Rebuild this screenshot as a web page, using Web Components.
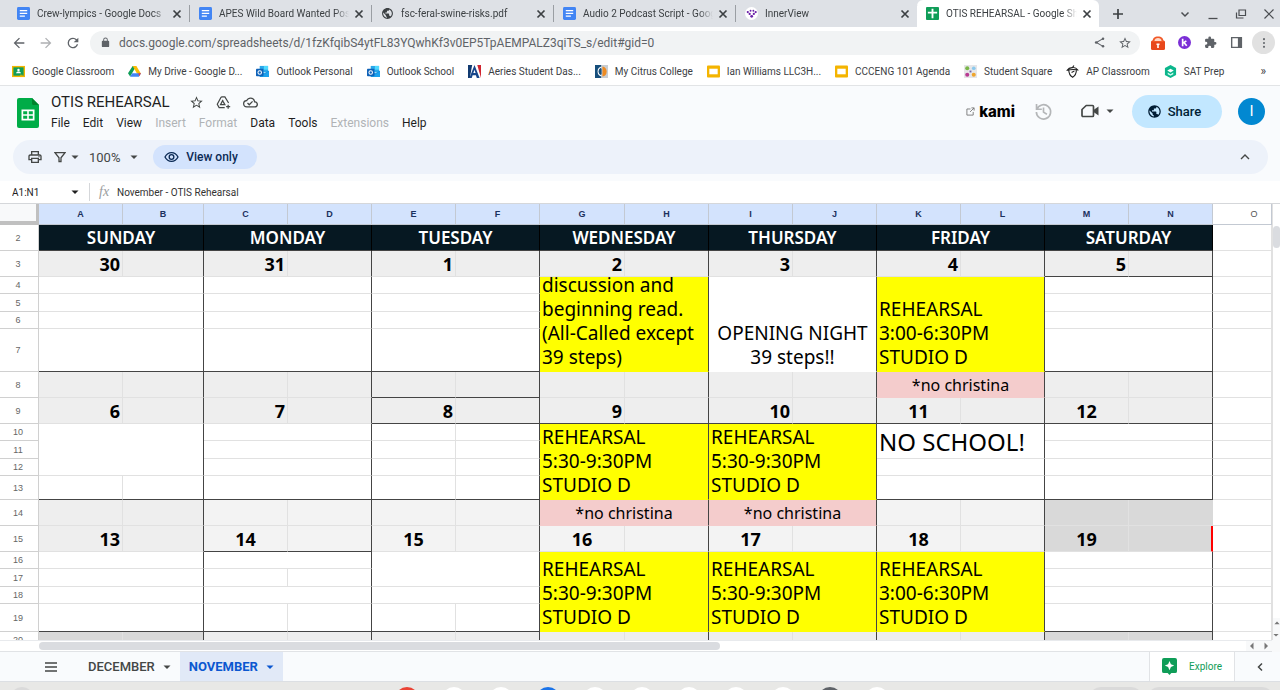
<!DOCTYPE html>
<html lang="en">
<head>
<meta charset="utf-8">
<title>OTIS REHEARSAL - Google Sheets</title>
<style>
  html, body { height: 100%; }
  body {
    margin: 0;
    display: flex;
    flex-direction: column;
    overflow: hidden;
    background: #fff;
    color: #3c4043;
    font-family: Roboto, "Liberation Sans", sans-serif;
    font-size: 10px;
  }
</style>
</head>
<body>
  <tab-strip>
    <browser-tab icon="docs">Crew-lympics - Google Docs</browser-tab>
    <browser-tab icon="docs">APES Wild Board Wanted Poster</browser-tab>
    <browser-tab icon="earth">fsc-feral-swine-risks.pdf</browser-tab>
    <browser-tab icon="docs">Audio 2 Podcast Script - Google Docs</browser-tab>
    <browser-tab icon="inner">InnerView</browser-tab>
    <browser-tab icon="sheetTab" active>OTIS REHEARSAL - Google Sheets</browser-tab>
  </tab-strip>
  <address-bar></address-bar>
  <bookmark-bar>
    <book-mark icon="classroom">Google Classroom</book-mark>
    <book-mark icon="drive">My Drive - Google D...</book-mark>
    <book-mark icon="outlook">Outlook Personal</book-mark>
    <book-mark icon="outlook">Outlook School</book-mark>
    <book-mark icon="aeries">Aeries Student Das...</book-mark>
    <book-mark icon="citrus">My Citrus College</book-mark>
    <book-mark icon="slides">Ian Williams LLC3H...</book-mark>
    <book-mark icon="slides">CCCENG 101 Agenda</book-mark>
    <book-mark icon="square">Student Square</book-mark>
    <book-mark icon="acorn">AP Classroom</book-mark>
    <book-mark icon="sat">SAT Prep</book-mark>
  </bookmark-bar>
  <docs-header>OTIS REHEARSAL</docs-header>
  <sheet-toolbar></sheet-toolbar>
  <formula-bar></formula-bar>
  <sheet-grid></sheet-grid>
  <sheet-tabs></sheet-tabs>
  <os-shelf></os-shelf>

<script>
// [viewBox, markup]; shapes without a fill of their own use currentColor
const ICONS = {
  docs: ['0 0 14 14', '<rect width="14" height="14" rx="1.5" fill="#4285f4"/><path d="M3 3.2h8v1.4H3zM3 6.2h8v1.4H3zM3 9.2h5.500v1.400H3z" fill="#fff"/>'],
  sheetTab: ['0 0 14 14', '<rect width="14" height="14" rx="1" fill="#0f9d58"/><path d="M6 2h2v3h4v2H8v5H6V7H2V5h4z" fill="#fff"/>'],
  earth: ['0 0 24 24', '<path d="M12 2C6.480 2 2 6.480 2 12s4.480 10 10 10 10-4.480 10-10S17.520 2 12 2zm-1 17.930c-3.950-.490-7-3.850-7-7.930 0-.620.080-1.210.210-1.790L9 15v1c0 1.100.900 2 2 2v1.930zm6.900-2.540c-.260-.810-1-1.390-1.900-1.390h-1v-3c0-.550-.450-1-1-1H8v-2h2c.550 0 1-.450 1-1V7h2c1.100 0 2-.900 2-2v-.410c2.930 1.190 5 4.060 5 7.410 0 2.080-.800 3.970-2.100 5.390z"/>'],
  inner: ['0 0 14 14', '<circle cx="7" cy="7" r="7" fill="#fff"/><g fill="#6b21a8"><circle cx="3" cy="5.500" r="1.200"/><circle cx="6" cy="4" r="1"/><circle cx="9" cy="4" r="1"/><circle cx="11.500" cy="5.500" r="1.200"/><circle cx="5" cy="7.500" r="1.200"/><circle cx="9.500" cy="7.500" r="1.200"/><circle cx="7.200" cy="10" r="1.500"/></g>'],
  close: ['0 0 12 12', '<path d="M2.500 2.500l7 7M9.500 2.500l-7 7" stroke="currentColor" stroke-width="1.700"/>'],
  thinClose: ['0 0 12 12', '<path d="M1.500 1.500l9 9M10.500 1.500l-9 9" stroke="currentColor" stroke-width="1.200"/>'],
  plus: ['0 0 12 12', '<path d="M6 1v10M1 6h10" stroke="currentColor" stroke-width="1.700"/>'],
  chevDown: ['0 0 12 12', '<path d="M2.500 4.500L6 8l3.500-3.500" fill="none" stroke="currentColor" stroke-width="1.500"/>'],
  chevUp: ['0 0 12 12', '<path d="M2 8l4-4 4 4" fill="none" stroke="currentColor" stroke-width="1.400"/>'],
  chevLeft: ['0 0 12 12', '<path d="M8 2.500L4.500 6 8 9.500" fill="none" stroke="currentColor" stroke-width="1.500"/>'],
  minimize: ['0 0 12 12', '<path d="M1.500 10.500h9" stroke="currentColor" stroke-width="1.300"/>'],
  restore: ['0 0 12 12', '<path d="M1.500 4.500v5.500h7M4 2h6.500v5.500H4z" fill="none" stroke="currentColor" stroke-width="1.200"/>'],
  back: ['0 0 24 24', '<path d="M20 11H7.830l5.590-5.590L12 4l-8 8 8 8 1.410-1.410L7.830 13H20v-2z"/>'],
  forward: ['0 0 24 24', '<path d="M12 4l-1.410 1.410L16.170 11H4v2h12.170l-5.580 5.590L12 20l8-8z"/>'],
  reload: ['0 0 24 24', '<path d="M17.650 6.350A7.958 7.958 0 0 0 12 4a8 8 0 1 0 7.730 10h-2.080A6 6 0 1 1 12 6c1.660 0 3.140.690 4.220 1.780L13 11h7V4l-2.350 2.350z"/>'],
  lock: ['0 0 24 24', '<path d="M18 8h-1V6A5 5 0 0 0 7 6v2H6a2 2 0 0 0-2 2v10c0 1.100.900 2 2 2h12a2 2 0 0 0 2-2V10a2 2 0 0 0-2-2zM9 6a3 3 0 0 1 6 0v2H9z"/>'],
  share: ['0 0 14 14', '<path d="M11.500 2L3 7l8.500 5" fill="none" stroke="currentColor" stroke-width="1.300"/><circle cx="11.500" cy="2.200" r="1.600"/><circle cx="2.800" cy="7" r="1.700"/><circle cx="11.500" cy="11.800" r="1.600"/>'],
  star: ['0 0 24 24', '<path d="M22 9.240l-7.190-.620L12 2 9.190 8.630 2 9.240l5.460 4.730L5.820 21 12 17.270 18.180 21l-1.630-7.030L22 9.240zM12 15.400l-3.760 2.270 1-4.280-3.320-2.880 4.380-.380L12 6.100l1.710 4.040 4.380.380-3.320 2.880 1 4.280L12 15.400z"/>'],
  redLock: ['0 0 14 14', '<rect y="4.500" width="14" height="9.500" rx="1.500" fill="#e8481c"/><path d="M1.500 6C1.500 2 3.500.5 7 .5S12.500 2 12.500 6z" fill="#f15a29"/><path d="M3.500 5c0-2 1.500-3 3.500-3s3.500 1 3.500 3z" fill="#ffd9c7"/><path d="M5.500 7.500h3v1.500H7.800v3H6.200V9h-.7z" fill="#fff"/>'],
  kamiDot: ['0 0 14 14', '<circle cx="7" cy="7" r="7" fill="#7b2fd6"/><path d="M5 3v8M5 8l4-2.800M6.600 7.200L9.400 10.500" stroke="#fff" stroke-width="1.800" fill="none"/>'],
  puzzle: ['0 0 24 24', '<path d="M20.500 11H19V7a2 2 0 0 0-2-2h-4V3.500a2.500 2.500 0 0 0-5 0V5H4a2 2 0 0 0-2 2v3.800h1.500a2.700 2.700 0 0 1 0 5.400H2V20c0 1.100.900 2 2 2h3.800v-1.500a2.700 2.700 0 0 1 5.400 0V22H17a2 2 0 0 0 2-2v-4h1.500a2.500 2.500 0 0 0 0-5z"/>'],
  panel: ['0 0 14 14', '<path d="M1.800 1.800h10.400v10.400H1.800z" fill="none" stroke="currentColor" stroke-width="1.500"/><path d="M8.500 1.500H13v11H8.500z"/>'],
  dots: ['0 0 14 14', '<circle cx="7" cy="2.500" r="1.200"/><circle cx="7" cy="7" r="1.200"/><circle cx="7" cy="11.500" r="1.200"/>'],
  classroom: ['0 0 14 14', '<path d="M0 1h14v12H0z" fill="#f4b400"/><path d="M1.500 2.500h11v9h-11z" fill="#0f9d58"/><path d="M8.500 10.500h3v1h-3z" fill="#f4b400"/><circle cx="7" cy="5.300" r="1.300" fill="#fff"/><path d="M4.300 9c.3-1.400 1.300-2 2.700-2s2.400.6 2.700 2z" fill="#fff"/>'],
  drive: ['0 0 14 14', '<path d="M5 1h4L4.500 8.700 2.300 12.500 0 9z" fill="#0f9d58"/><path d="M5 1h4l5 8.500H9.800z" fill="#fbbc04"/><path d="M4.500 9h9.500l-2.300 3.700H2.200z" fill="#4285f4"/><path d="M11 9h3l-1.800 3z" fill="#ea4335"/>'],
  outlook: ['0 0 14 14', '<path d="M4 1h9v7H4z" fill="#28a8ea"/><path d="M8.500 1H13v4H8.500z" fill="#50d9ff"/><path d="M4 6l5 3 5-3v7H4z" fill="#1490df"/><path d="M4 13l10-6v6z" fill="#1ba1ec"/><rect y="4" width="8" height="8" rx=".8" fill="#0f62b8"/><circle cx="4" cy="8" r="1.900" fill="none" stroke="#fff" stroke-width="1.100"/>'],
  aeries: ['0 0 14 14', '<path d="M0 0h4.500L2 14H0z" fill="#123a70"/><path d="M10 0h4v14z" fill="#d02430"/><path d="M7 0l5.500 14h-3L8.500 11H5l-1 3H1.500z" fill="#17468b"/><path d="M7 5l1.200 3.700H5.700z" fill="#fff"/>'],
  citrus: ['0 0 14 14', '<path d="M0 0h7v14H0z" fill="#174f7c"/><path d="M7 0h7v14H7z" fill="#c9cdd1"/><path d="M7 2.200a5 5 0 0 0 0 9.600" fill="none" stroke="#fff" stroke-width="1.300"/><path d="M7 4a3 3 0 0 0 0 6z" fill="#174f7c"/><path d="M8 1.500a5.600 5.600 0 0 1 0 11z" fill="#ee8b22"/>'],
  slides: ['0 0 14 14', '<rect y=".5" width="14" height="13" rx="1" fill="#f4b400"/><path d="M2.500 4h9v6h-9z" fill="#fff"/>'],
  square: ['0 0 14 14', '<rect width="14" height="14" fill="#e6e6e8"/><circle cx="3.500" cy="3.500" r="2.200" fill="#7ab648"/><circle cx="10.500" cy="3.500" r="2" fill="#8cc9ed"/><circle cx="3.500" cy="10.500" r="2.200" fill="#b83a92"/><circle cx="10.500" cy="10.500" r="2.200" fill="#efa52d"/><path d="M6 6h2v2H6z" fill="#6c63ae"/>'],
  acorn: ['0 0 14 14', '<path d="M1.500 5.500C3 3 5 3 7 2.800S11 3 12.500 5.200C9 4.600 5 4.700 1.500 5.500zM3 5.200c0 4 1.200 6.500 4.200 8 3-1.700 4-4 4-8M7 2.800L8.500.5M6 8l3-1.500" fill="none" stroke="#222" stroke-width="1.200"/>'],
  sat: ['0 0 14 14', '<path d="M7 0l6 3.200v7.600L7 14l-6-3.200V3.200z" fill="#0cb68c"/><path d="M3.500 6L7 4l3.500 2L7 8.200z" fill="#fff"/><path d="M4 8.200l3 1.800 3-1.800V10l-3 1.700L4 10z" fill="#d2fff2"/>'],
  sheets: ['0 0 22 30', '<path d="M2 0h13l7 7v21a2 2 0 0 1-2 2H2a2 2 0 0 1-2-2V2a2 2 0 0 1 2-2z" fill="#00ac47"/><path d="M15 0l7 7h-5.500A1.500 1.500 0 0 1 15 5.500z" fill="#00832d"/><path d="M4.500 11.500h13v11h-13zM6.200 13.200v3h4v-3zm5.600 0v3h4v-3zm-5.600 4.600v3h4v-3zm5.600 0v3h4v-3z" fill="#fff" fill-rule="evenodd"/>'],
  driveAdd: ['0 0 16 14', '<path d="M5.500 1h4l4 6.500M5.500 1L1.300 8.800l2 3.700h6M7.500 4.200L4.800 9.300h4.700L7.500 5.800M13 9.300v4.400M10.800 11.500h4.400" fill="none" stroke="currentColor" stroke-width="1.300"/>'],
  cloud: ['0 0 24 24', '<path d="M19.350 10.040A7.490 7.490 0 0 0 12 4C9.110 4 6.600 5.640 5.350 8.040A5.994 5.994 0 0 0 0 14c0 3.310 2.690 6 6 6h13c2.760 0 5-2.240 5-5 0-2.640-2.050-4.780-4.650-4.960zM19 18H6a4 4 0 0 1-.440-7.980l1.070-.110.500-.950a5.469 5.469 0 0 1 10.260 1.470l.300 1.500 1.530.110A3 3 0 0 1 19 18zm-9-3.820l-2.090-2.090L6.500 13.500 10 17l6.010-6.010-1.410-1.410z"/>'],
  external: ['0 0 10 10', '<path d="M5 2.200H1V9h7V5.500M6 1h3v3M9 1L4.500 5.500" fill="none" stroke="currentColor"/>'],
  history: ['0 0 24 24', '<path d="M3.500 9.500a9 9 0 1 1-.5 3M3.200 2.500v6.700h6.700M12 7v5.800l4.300 2.600" fill="none" stroke="currentColor" stroke-width="2.100"/>'],
  camera: ['0 0 18 16', '<path d="M5.200 2.500h6.300q1 0 1 1v9q0 1-1 1H2q-1 0-1-1V6.500z" fill="none" stroke="currentColor" stroke-width="1.700" stroke-linejoin="round"/><path d="M12.500 7L17.500 3.500v9L12.500 9z"/>'],
  caret: ['0 0 8 8', '<path d="M.500 2.500h7L4 6z"/>'],
  print: ['0 0 24 24', '<path d="M19 8h-1V3H6v5H5c-1.660 0-3 1.340-3 3v6h4v4h12v-4h4v-6c0-1.660-1.340-3-3-3zM8 5h8v3H8V5zm8 12v2H8v-4h8v2zm2-2v-2H6v2H4v-4c0-.550.450-1 1-1h14c.550 0 1 .450 1 1v4h-2z"/><circle cx="18" cy="11.500" r="1"/>'],
  filter: ['0 0 12 12', '<path d="M1 1.700h10L7 6.800v3.700H5V6.800z" fill="none" stroke="currentColor" stroke-width="1.300"/>'],
  eye: ['0 0 18 14', '<path d="M1.200 7C3 3.500 5.700 1.800 9 1.800S15 3.500 16.800 7C15 10.500 12.300 12.200 9 12.200S3 10.500 1.200 7z" fill="none" stroke="currentColor" stroke-width="1.600"/><circle cx="9" cy="7" r="2.800" fill="none" stroke="currentColor" stroke-width="1.600"/>'],
  menu: ['0 0 12 10', '<path d="M0 1h12M0 5h12M0 9h12" stroke="currentColor" stroke-width="1.400"/>'],
  explore: ['0 0 16 18', '<path d="M2 0h12a2 2 0 0 1 2 2v12a2 2 0 0 1-2 2h-4l-2 2-2-2H2a2 2 0 0 1-2-2V2a2 2 0 0 1 2-2z" fill="#0f9d58"/><path d="M8 3l1.500 3.500L13 8 9.500 9.500 8 13 6.500 9.500 3 8l3.500-1.500z" fill="#fff"/>']
};

// Shared by every component: resets for the host and the controls used below
const BASE = `
  :host, * { box-sizing: border-box; }
  button, input, select { font: inherit; color: inherit; background: none; border: 0; margin: 0; padding: 0; outline: 0; }
  button { display: inline-flex; align-items: center; justify-content: center; cursor: pointer; }
  select { appearance: none; }
  a { color: inherit; text-decoration: none; }
`;

function icon(name, width = 14, height = width) {
  const [box, body] = ICONS[name];
  return `<svg viewBox="${box}" width="${width}" height="${height}" fill="currentColor" aria-hidden="true" style="flex:none;display:block">${body}</svg>`;
}

function button(name, label, size, height) {
  return `<button aria-label="${label}">${icon(name, size, height)}</button>`;
}

class Component extends HTMLElement {
  constructor() {
    super();
    this.attachShadow({ mode: 'open' });
  }

  connectedCallback() {
    this.shadowRoot.innerHTML = `<style>${BASE}${this.styles()}</style>${this.markup()}`;
  }
}

customElements.define('browser-tab', class extends Component {
  styles() {
    return `
      :host { flex: 0 1 182px; min-width: 0; height: 27px; display: flex; align-items: center; padding: 0 6px 0 9px; gap: 4px; border-right: 1px solid; border-image: linear-gradient(transparent 20%, #9a9ea3 20%, #9a9ea3 80%, transparent 80%) 1; }
      :host([active]) { margin-left: -1px; background: #fff; border: 0; border-radius: 6px 6px 0 0; }
      a { flex: 1; min-width: 0; display: flex; align-items: center; gap: 7px; }
      span { flex: 1; min-width: 0; overflow: hidden; white-space: nowrap; mask-image: linear-gradient(to left, transparent, #000 14px); }
    `;
  }
  markup() {
    return `<a href="#">${icon(this.getAttribute('icon'), 13)}<span><slot></slot></span></a>${button('close', 'Close tab', 12)}`;
  }
});

customElements.define('tab-strip', class extends Component {
  styles() {
    return `
      :host { flex: none; display: flex; align-items: center; height: 27px; background: #dee1e6; padding-left: 8px; }
      .new { margin-left: 13px; }
      .window { margin-left: auto; display: flex; gap: 16px; padding-right: 5px; color: #4a4d51; }
    `;
  }
  markup() {
    return `<slot></slot><button class="new" aria-label="New tab">${icon('plus', 12)}</button>
      <div class="window">${button('chevDown', 'Search tabs', 12)}${button('minimize', 'Minimize', 12)}${button('restore', 'Restore', 12)}${button('thinClose', 'Close', 12)}</div>`;
  }
});

customElements.define('address-bar', class extends Component {
  styles() {
    return `
      :host { flex: none; display: flex; align-items: center; height: 31px; padding: 0 5px 0 11px; color: #5f6368; }
      .nav { display: flex; gap: 11px; margin-right: 9px; }
      .nav button:nth-child(2) { opacity: .5; }
      .url { flex: 1; display: flex; align-items: center; gap: 8px; height: 24px; padding: 0 8px 0 10px; background: #f1f3f4; border-radius: 12px; }
      input { flex: 1; min-width: 0; font-size: 12px; }
      .url button { margin-left: 5px; }
      .extensions { display: flex; align-items: center; gap: 13px; margin-left: 11px; }
      .more { width: 23px; height: 23px; margin-left: -4px; border-radius: 50%; background: #e1e1e1; }
    `;
  }
  markup() {
    return `
      <div class="nav">${button('back', 'Back', 16)}${button('forward', 'Forward', 16)}${button('reload', 'Reload', 16)}</div>
      <div class="url">${icon('lock', 11)}
        <input aria-label="Address" value="docs.google.com/spreadsheets/d/1fzKfqibS4ytFL83YQwhKf3v0EP5TpAEMPALZ3qiTS_s/edit#gid=0">
        ${button('share', 'Share page', 11)}${button('star', 'Bookmark', 14)}
      </div>
      <div class="extensions">${button('redLock', 'Password extension', 14)}${button('kamiDot', 'Kami extension', 13)}${button('puzzle', 'Extensions', 13)}${button('panel', 'Side panel', 13)}
        <button class="more" aria-label="Menu">${icon('dots', 12)}</button></div>`;
  }
});

customElements.define('book-mark', class extends Component {
  styles() {
    return `
      :host { flex: none; }
      a { display: flex; align-items: center; gap: 7px; white-space: nowrap; }
    `;
  }
  markup() {
    return `<a href="#">${icon(this.getAttribute('icon'), 13)}<slot></slot></a>`;
  }
});

customElements.define('bookmark-bar', class extends Component {
  styles() {
    return `
      :host { flex: none; display: flex; align-items: center; gap: 14px; height: 28px; padding: 0 14px 1px 12px; border-bottom: 1px solid #e2e4e6; }
      button { margin-left: auto; font-size: 12px; }
    `;
  }
  markup() {
    return `<slot></slot><button aria-label="More bookmarks">»</button>`;
  }
});

customElements.define('docs-header', class extends Component {
  styles() {
    return `
      :host { flex: none; display: flex; align-items: center; height: 54px; padding: 0 15px 2px 17px; background: #f9fbfd; color: #444746; }
      .logo { margin-right: 12px; padding-top: 2px; }
      .name { display: flex; align-items: center; gap: 12px; height: 22px; }
      h1 { margin: 0 7px 0 0; font-size: 15px; font-weight: 400; color: #1f1f1f; }
      nav { display: flex; gap: 13px; font-size: 12px; line-height: 20px; color: #1f1f1f; }
      button:disabled { color: #b0b3b6; }
      .tools { margin-left: auto; display: flex; align-items: center; padding-bottom: 2px; }
      .kami { gap: 4px; margin-right: 19px; font: 800 15px Inter, sans-serif; color: #000; }
      .kami svg { color: #777; }
      .history { color: #b4b6b8; margin-right: 28px; }
      .meet { gap: 7px; margin-right: 18px; }
      .share { gap: 6px; width: 90px; height: 33px; padding-right: 6px; border-radius: 17px; background: #c2e7ff; color: #001d35; font-size: 13px; font-weight: 500; }
      .user { width: 27px; height: 27px; margin-left: 16px; border-radius: 50%; background: #0288d1; color: #fff; font-size: 15px; }
    `;
  }
  markup() {
    const off = ['Insert', 'Format', 'Extensions'];
    const menus = ['File', 'Edit', 'View', 'Insert', 'Format', 'Data', 'Tools', 'Extensions', 'Help'];
    return `
      <div class="logo">${icon('sheets', 22, 30)}</div>
      <div>
        <div class="name"><h1><slot></slot></h1>${button('star', 'Star', 15)}${button('driveAdd', 'Add to Drive', 15, 13)}${button('cloud', 'Saved', 15)}</div>
        <nav>${menus.map(m => `<button${off.includes(m) ? ' disabled' : ''}>${m}</button>`).join('')}</nav>
      </div>
      <div class="tools">
        <button class="kami">${icon('external', 9)}kami</button>
        <button class="history" aria-label="Version history">${icon('history', 19)}</button>
        <button class="meet" aria-label="Join a call">${icon('camera', 18, 16)}${icon('caret', 8)}</button>
        <button class="share">${icon('earth', 15)}Share</button>
        <button class="user">I</button>
      </div>`;
  }
});

customElements.define('sheet-toolbar', class extends Component {
  styles() {
    return `
      :host { flex: none; padding: 0 12px 7px 13px; background: #f9fbfd; color: #444746; }
      .pill { display: flex; align-items: center; height: 34px; padding: 0 17px 0 14px; border-radius: 17px; background: #edf2fa; }
      .filter { gap: 5px; margin: 0 10px 0 11px; }
      .zoom { display: flex; align-items: center; font-size: 13px; }
      select { width: 41px; }
      .view { gap: 7px; margin-left: 15px; width: 104px; height: 24px; padding-right: 8px; border-radius: 12px; background: #d3e3fd; color: #0b2a55; font-size: 12px; font-weight: 500; }
      .hide { margin-left: auto; }
    `;
  }
  markup() {
    return `<div class="pill">
      ${button('print', 'Print', 16)}
      <button class="filter" aria-label="Filter">${icon('filter', 12)}${icon('caret', 8)}</button>
      <label class="zoom"><select aria-label="Zoom"><option>100%</option></select>${icon('caret', 8)}</label>
      <button class="view">${icon('eye', 15, 12)}View only</button>
      <button class="hide" aria-label="Hide the menus">${icon('chevUp', 12)}</button>
    </div>`;
  }
});

customElements.define('formula-bar', class extends Component {
  styles() {
    return `
      :host { flex: none; display: flex; align-items: center; height: 23px; border-bottom: 1px solid #d5d7da; color: #1f1f1f; }
      .range { width: 53px; margin-left: 12px; }
      .names { width: 20px; margin-right: 4px; }
      label { width: 28px; border-left: 1px solid #d5d7da; padding-left: 9px; color: #9a9da0; font: italic 14px/18px "Liberation Serif", serif; }
      .value { flex: 1; color: #333; }
    `;
  }
  markup() {
    return `<input class="range" aria-label="Name box" value="A1:N1"><button class="names" aria-label="Named ranges">${icon('caret', 8)}</button>
      <label for="fx">fx</label><input id="fx" class="value" value="November - OTIS Rehearsal">`;
  }
});

const YELLOW = '#ffff00', PINK = '#f4cccc', GREY = '#eeeeee', LIGHT = '#f3f3f3', DARK = '#d9d9d9';

// One entry per weekday in each row. split: two cells, span: rows covered,
// rule: black bottom border, null: covered by the merge above.
const blank = (o = {}) => ({ ...o });
const pair = (o = {}) => ({ split: true, ...o });
const date = (text, align, o = {}) => ({ split: true, text, align, kind: 'date', bg: GREY, ...o });
const note = { text: '*no christina', bg: PINK, kind: 'note', quiet: true };
const call = (text, o = {}) => ({ text, bg: YELLOW, kind: 'call', span: 4, quiet: true, ...o });
const times = (n, make) => Array.from({ length: n }, make);
const evening = 'REHEARSAL\n5:30-9:30PM\nSTUDIO D';
const afternoon = 'REHEARSAL\n3:00-6:30PM\nSTUDIO D';

const ROWS = [
  [2, 26, ['SUNDAY', 'MONDAY', 'TUESDAY', 'WEDNESDAY', 'THURSDAY', 'FRIDAY', 'SATURDAY'].map(text => ({ text, kind: 'day', rule: true }))],
  [3, 26, [30, 31, 1, 2, 3, 4, 5].map((n, i) => date(n, 'right', { rule: i === 6 }))],
  [4, 17, [blank(), blank(), blank(), call('discussion and\nbeginning read.\n(All-Called except\n39 steps)'), call('OPENING NIGHT\n39 steps!!', { bg: '#fff', align: 'center' }), call(afternoon), blank()]],
  [5, 18, [blank(), blank(), blank(), null, null, null, blank()]],
  [6, 17, [blank(), blank(), blank(), null, null, null, blank()]],
  [7, 43, [blank({ rule: true }), blank({ rule: true }), blank({ rule: true }), null, null, null, blank({ rule: true })]],
  [8, 26, [pair({ bg: GREY }), pair({ bg: GREY }), pair({ bg: GREY, rule: true }), pair({ bg: GREY }), pair({ bg: GREY }), note, pair({ bg: GREY })]],
  [9, 26, [date(6, 'right'), date(7, 'right'), date(8, 'right', { rule: true }), date(9, 'right', { rule: true }), date(10, 'right', { rule: true }), date(11, 'center', { rule: true }), date(12, 'center', { rule: true })]],
  [10, 17, [blank({ span: 3 }), blank(), pair(), call(evening), call(evening), { text: 'NO SCHOOL!', kind: 'big', span: 2 }, blank()]],
  [11, 18, [null, blank(), pair(), null, null, null, blank()]],
  [12, 17, [null, blank(), pair(), null, null, blank(), blank()]],
  [13, 24, [pair({ rule: true }), blank({ rule: true }), pair({ rule: true }), null, null, blank({ rule: true }), blank({ rule: true })]],
  [14, 26, [pair({ bg: GREY }), pair({ bg: LIGHT }), pair({ bg: LIGHT }), note, note, pair({ bg: LIGHT }), pair({ bg: DARK, open: true })]],
  [15, 26, [date(13, 'right'), date(14, 'center', { bg: LIGHT, rule: true }), date(15, 'center', { bg: LIGHT }), date(16, 'center', { bg: LIGHT }), date(17, 'center', { bg: LIGHT }), date(18, 'center', { bg: LIGHT }), date(19, 'center', { bg: DARK, red: true })]],
  [16, 17, [blank(), blank(), blank({ span: 2 }), call(evening), call(evening), call(afternoon), blank()]],
  [17, 18, [blank(), pair(), null, null, null, null, blank()]],
  [18, 17, [blank(), blank(), blank(), null, null, null, blank()]],
  [19, 28, [blank({ rule: true }), pair({ rule: true }), pair({ rule: true }), null, null, null, blank({ rule: true })]],
  [20, 17, [pair({ bg: DARK }), ...times(5, () => pair({ bg: GREY })), pair({ bg: DARK })]]
];

// Columns that are not the usual 84px wide
const WIDTHS = { B: 81, G: 85 };

customElements.define('sheet-grid', class extends Component {
  styles() {
    return `
      :host { flex: 1; min-height: 0; display: grid; grid-template: minmax(0, 1fr) 12px / minmax(0, 1fr) 8px; }
      .view { overflow: hidden; }
      table { width: 100%; table-layout: fixed; border-collapse: separate; border-spacing: 0; color: #000; font-family: "Noto Sans", "Open Sans", sans-serif; }
      .head { width: 39px; }
      th, td { padding: 0; border: 0 solid #e1e1e1; border-width: 0 1px 1px 0; overflow: hidden; }
      thead th { height: 21px; background: #d3e3fd; border-color: #c3c9d2; color: #1b315e; font: 700 9px "Liberation Sans", sans-serif; }
      thead th:last-child { background: #fff; color: #555; font-weight: 400; padding-left: 24px; }
      thead th.corner { background: #f8f9fa; border: solid #c0c0c0; border-width: 0 3px 4px 0; }
      tbody th { border-color: #d0d0d0; color: #666; font: 400 9px "Liberation Sans", sans-serif; }
      tbody th div { align-items: center; justify-content: center; padding-right: 2px; }
      td div, tbody th div { display: flex; overflow: hidden; }
      .edge { border-right-color: #444; }
      .rule { border-bottom-color: #444; }
      .quiet { border-bottom-color: var(--bg); }
      .open { border-right-color: #d9d9d9; }
      .red { border-right: 2px solid #f00; }
      td.day { background: #061822; border-right-color: #000; color: #fff; font-weight: 600; font-size: 17px; }
      .day div, .note div { align-items: center; justify-content: center; }
      .date { font-weight: 700; font-size: 18px; }
      .date div { align-items: center; padding: 0 2px; }
      .right div { justify-content: flex-end; }
      .center div { justify-content: center; text-align: center; }
      .call { font-size: 19px; line-height: 24px; white-space: pre; }
      .call div { align-items: flex-end; padding: 0 2px 2px; }
      .note { font-size: 16px; }
      .big { font-size: 24px; }
      .big div { align-items: center; padding: 0 2px; }
      .vertical { display: flex; flex-direction: column; justify-content: space-between; border-left: 1px solid #e1e1e1; background: #fff; }
      .thumb { background: #dadce0; border-radius: 4px; }
      .vertical .thumb { height: 22px; margin-top: 22px; }
      .arrows { display: flex; background: #f8f9fa; color: #777; }
      .vertical .arrows { flex-direction: column; gap: 6px; padding: 2px 0; }
      .horizontal { display: flex; align-items: center; background: #fff; border-top: 1px solid #e8eaed; border-bottom: 1px solid #e1e3e6; }
      .horizontal .thumb { width: calc(54% - 6px); height: 8px; margin-left: 39px; }
      .horizontal .arrows { margin-left: auto; gap: 6px; padding: 1px 2px; }
      .corner { background: #f8f9fa; }
      .up { transform: rotate(180deg); } .lt { transform: rotate(90deg); } .rt { transform: rotate(-90deg); }
    `;
  }

  cell(day, row) {
    if (!day) return '';
    const span = day.span || 1;
    const height = ROWS.slice(row, row + span).reduce((sum, r) => sum + r[1], 0) - 1;
    const flags = ['rule', 'quiet'].filter(k => day[k]);
    const bg = day.bg || '#fff';
    const side = day.red ? 'red' : day.open ? 'open' : 'edge';
    const make = (text, cls, cols) =>
      `<td class="${cls.join(' ')}" colspan="${cols}" rowspan="${span}" style="--bg:${bg}${day.kind === 'day' ? '' : ';background:' + bg}"><div style="height:${height}px">${text}</div></td>`;
    if (!day.split) return make(day.text || '', [...flags, side, day.kind || '', day.align || ''], 2);
    return make(day.text || '', [...flags, day.kind || '', day.align || ''], 1) + make('', [...flags, side], 1);
  }

  markup() {
    const letters = 'ABCDEFGHIJKLMNO'.split('');
    const col = l => l === 'O' ? '<col>' : `<col style="width:${WIDTHS[l] || 84}px">`;
    return `
      <div class="view"><table>
        <colgroup><col class="head">${letters.map(col).join('')}</colgroup>
        <thead><tr><th class="corner"></th>${letters.map(l => `<th scope="col">${l}</th>`).join('')}</tr></thead>
        <tbody>${ROWS.map(([n, height, days], row) => `<tr><th scope="row"><div style="height:${height - 1}px">${n}</div></th>${days.map(d => this.cell(d, row)).join('')}<td></td></tr>`).join('')}</tbody>
      </table></div>
      <div class="vertical"><div class="thumb"></div><div class="arrows"><span class="up">${icon('caret', 6)}</span><span>${icon('caret', 6)}</span></div></div>
      <div class="horizontal"><div class="thumb"></div><div class="arrows"><span class="lt">${icon('caret', 8)}</span><span class="rt">${icon('caret', 8)}</span></div></div>
      <div class="corner"></div>`;
  }
});

customElements.define('sheet-tabs', class extends Component {
  styles() {
    return `
      :host { flex: none; display: flex; align-items: stretch; height: 30px; background: #f9fbfd; border-bottom: 1px solid #dcdfe3; color: #444746; }
      .all { margin: 0 22px 0 45px; }
      .sheet { gap: 8px; padding: 0 9px; font-size: 13px; font-weight: 500; }
      .active { background: #e1e9f7; color: #0b57d0; font-weight: 700; }
      .explore { gap: 12px; width: 86px; margin-left: auto; background: #fff; border: solid #e1e3e6; border-width: 0 1px; color: #0f9d58; font-size: 10px; }
      .side { width: 45px; padding-left: 4px; }
    `;
  }
  markup() {
    return `<button class="all" aria-label="All sheets">${icon('menu', 12, 10)}</button>
      <button class="sheet">DECEMBER${icon('caret', 8)}</button>
      <button class="sheet active">NOVEMBER${icon('caret', 8)}</button>
      <button class="explore">${icon('explore', 15, 17)}Explore</button>
      <button class="side" aria-label="Show side panel">${icon('chevLeft', 12)}</button>`;
  }
});

customElements.define('os-shelf', class extends Component {
  styles() {
    return `
      :host { flex: none; height: 8px; overflow: hidden; display: grid; grid-template-columns: 1fr auto 1fr; align-items: start; padding: 5px 6px 0 10px; background: #e8e8e6; }
      i { display: block; width: 24px; height: 24px; border-radius: 50%; background: #fff; }
      .apps, .status { display: flex; gap: 23px; }
      .launcher, .status i { background: #dadada; }
      .status { justify-content: flex-end; gap: 4px; }
      .status i { width: 54px; border-radius: 12px; }
      .status i:last-child { width: 127px; }
    `;
  }
  markup() {
    const apps = ['#ea4335', '#fff', '#fff', '#1a73e8', '#fff', '#fff', '#fff', '#fff', '#fff', '#5f6368', '#fff'];
    return `<i class="launcher"></i><div class="apps">${apps.map(c => `<i style="background:${c}"></i>`).join('')}</div><div class="status"><i></i><i></i></div>`;
  }
});
</script>
</body>
</html>
